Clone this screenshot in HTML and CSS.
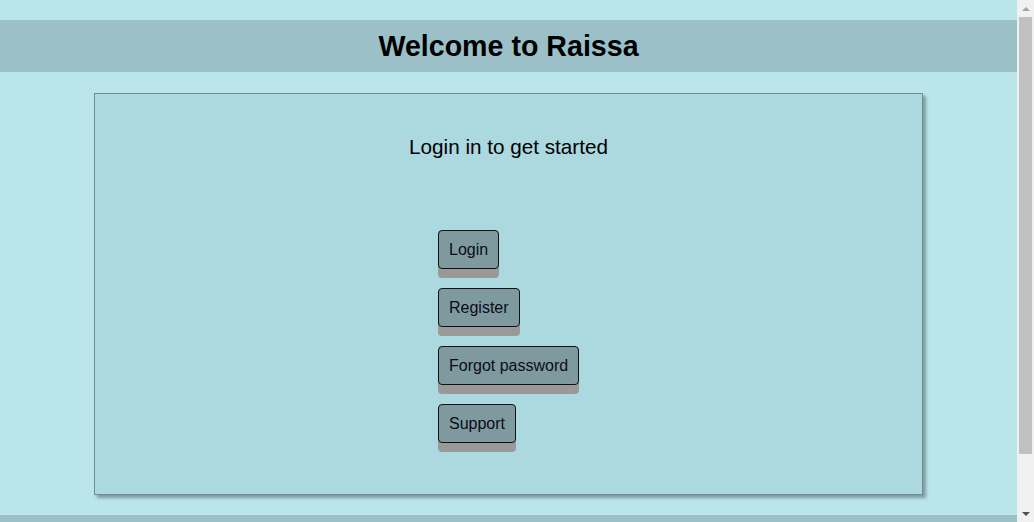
FILE: index.html
```html
<!DOCTYPE html>
<html lang="en">
<head>
<meta charset="utf-8">
<title>Welcome to Raissa</title>
<link rel="stylesheet" href="styles.css">
</head>
<body>
<div class="page">
  <header class="site-header">
    <h1 class="site-title">Welcome to Raissa</h1>
  </header>
  <main class="card">
    <p class="card-lead">Login in to get started</p>
    <div class="actions">
      <button class="btn" type="button">Login</button>
      <button class="btn" type="button">Register</button>
      <button class="btn" type="button">Forgot password</button>
      <button class="btn" type="button">Support</button>
    </div>
  </main>
  <footer class="site-footer"></footer>
</div>
<div class="scrollbar" aria-hidden="true">
  <span class="sb-arrow sb-up"></span>
  <span class="sb-track"><span class="sb-thumb"></span></span>
  <span class="sb-arrow sb-down"></span>
</div>
</body>
</html>
```
FILE: styles.css
```css
html, body {
  margin: 0;
  padding: 0;
}
body {
  background: #b9e5eb;
  font-family: "Liberation Sans", Arial, sans-serif;
  color: #000;
}
.page {
  margin-right: 17px;
  overflow: hidden;
}
.site-header {
  margin-top: 20px;
  background: #9bc0c8;
  padding: 10px;
  text-align: center;
}
.site-title {
  margin: 0;
  font-size: 28.6px;
  line-height: 32px;
  font-weight: bold;
}
.card {
  display: block;
  width: 827px;
  margin: 21px auto 0;
  background: #acd8df;
  border: 1px solid #6e8d92;
  box-shadow: 3px 3px 3px #7f9ca1;
  padding: 41px 0 51px;
}
.card-lead {
  margin: 0;
  font-size: 20.7px;
  line-height: 23px;
  text-align: center;
}
.actions {
  margin-top: 72px;
  padding-left: 343px;
  display: flex;
  flex-direction: column;
  align-items: flex-start;
  gap: 19px;
}
.btn {
  font-family: "Liberation Sans", Arial, sans-serif;
  font-size: 16px;
  line-height: 17px;
  padding: 10px 10px;
  background: #7f9a9e;
  color: #0b0b1a;
  border: 1px solid #111;
  border-radius: 4px;
  box-shadow: 0 9px #999;
  cursor: pointer;
}
.site-footer {
  margin-top: 20px;
  height: 52px;
  margin-bottom: 16px;
  background: #9bc0c8;
}

/* classic window scrollbar */
.scrollbar {
  position: fixed;
  top: 0;
  right: 0;
  width: 17px;
  height: 100vh;
  background: #f1f1f1;
  display: flex;
  flex-direction: column;
}
.sb-arrow {
  height: 17px;
  flex: none;
  display: flex;
  align-items: center;
  justify-content: center;
}
.sb-arrow::before {
  content: "";
  width: 0;
  height: 0;
  border-left: 4px solid transparent;
  border-right: 4px solid transparent;
}
.sb-up::before {
  border-bottom: 4px solid #a3a3a3;
}
.sb-down::before {
  border-top: 4px solid #505050;
}
.sb-track {
  flex: 1;
  display: flex;
  flex-direction: column;
  padding: 0 2px;
}
.sb-thumb {
  height: 437px;
  background: #c1c1c1;
}
```
